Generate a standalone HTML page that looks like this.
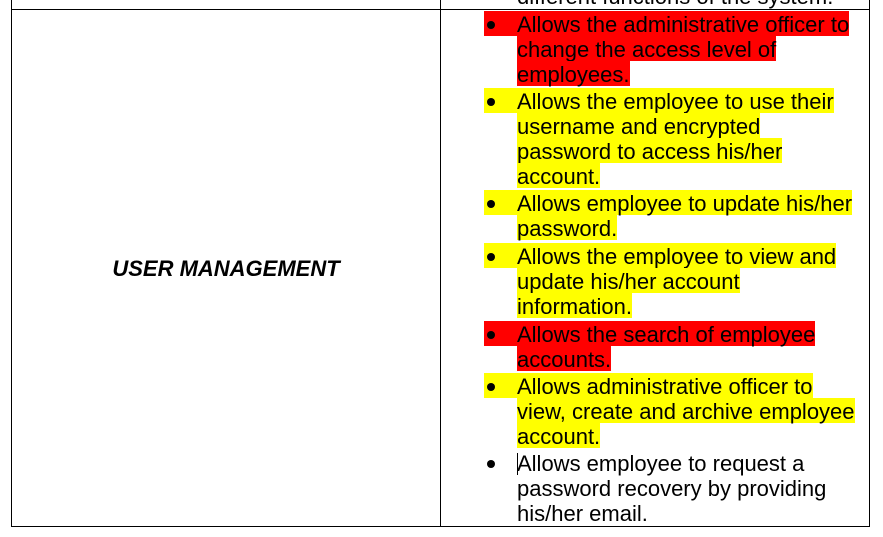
<!DOCTYPE html>
<html><head><style>
body{margin:0;width:883px;height:537px;background:#fff;position:relative;overflow:hidden;font-family:"Liberation Sans",Arial,sans-serif;font-size:22px;color:#000}
.b{position:absolute;background:#000}
.l{position:absolute;left:517px;height:25px;line-height:27px;white-space:nowrap}
.l span{display:inline-block;height:25px}
.f{left:484px}
.f span{padding-left:33px;position:relative}
.f span:before{content:"";position:absolute;left:3px;top:10px;width:8px;height:8px;border-radius:50%;background:#000}
.r{background:#ff0000}.y{background:#ffff00}
</style></head><body>
<div class="b" style="left:11px;top:9px;width:859px;height:1px"></div>
<div class="b" style="left:11px;top:526px;width:859px;height:1px"></div>
<div class="b" style="left:11px;top:0;width:1px;height:527px"></div>
<div class="b" style="left:440px;top:0;width:1px;height:527px"></div>
<div class="b" style="left:869px;top:0;width:1px;height:527px"></div>
<div class="l" style="top:-17px">different functions of the system.</div>
<div style="position:absolute;left:12px;width:428px;top:255px;text-align:center;font-weight:bold;font-style:italic;line-height:27px">USER MANAGEMENT</div>

<div class="l f" style="top:11px"><span class="r">Allows the administrative officer to</span></div>
<div class="l" style="top:36px"><span class="r">change the access level of</span></div>
<div class="l" style="top:61px"><span class="r">employees.</span></div>

<div class="l f" style="top:88px"><span class="y">Allows the employee to use their</span></div>
<div class="l" style="top:113px"><span class="y">username and encrypted</span></div>
<div class="l" style="top:138px"><span class="y">password to access his/her</span></div>
<div class="l" style="top:163px"><span class="y">account.</span></div>

<div class="l f" style="top:190px"><span class="y">Allows employee to update his/her</span></div>
<div class="l" style="top:215px"><span class="y">password.</span></div>

<div class="l f" style="top:243px"><span class="y">Allows the employee to view and</span></div>
<div class="l" style="top:268px"><span class="y">update his/her account</span></div>
<div class="l" style="top:293px"><span class="y">information.</span></div>

<div class="l f" style="top:321px"><span class="r">Allows the search of employee</span></div>
<div class="l" style="top:346px"><span class="r">accounts.</span></div>

<div class="l f" style="top:373px"><span class="y">Allows administrative officer to</span></div>
<div class="l" style="top:398px"><span class="y">view, create and archive employee</span></div>
<div class="l" style="top:423px"><span class="y">account.</span></div>

<div class="l f" style="top:450px"><span>Allows employee to request a</span></div>
<div class="b" style="left:517px;top:453px;width:1px;height:22px"></div>
<div class="l" style="top:475px">password recovery by providing</div>
<div class="l" style="top:500px">his/her email.</div>
</body></html>
